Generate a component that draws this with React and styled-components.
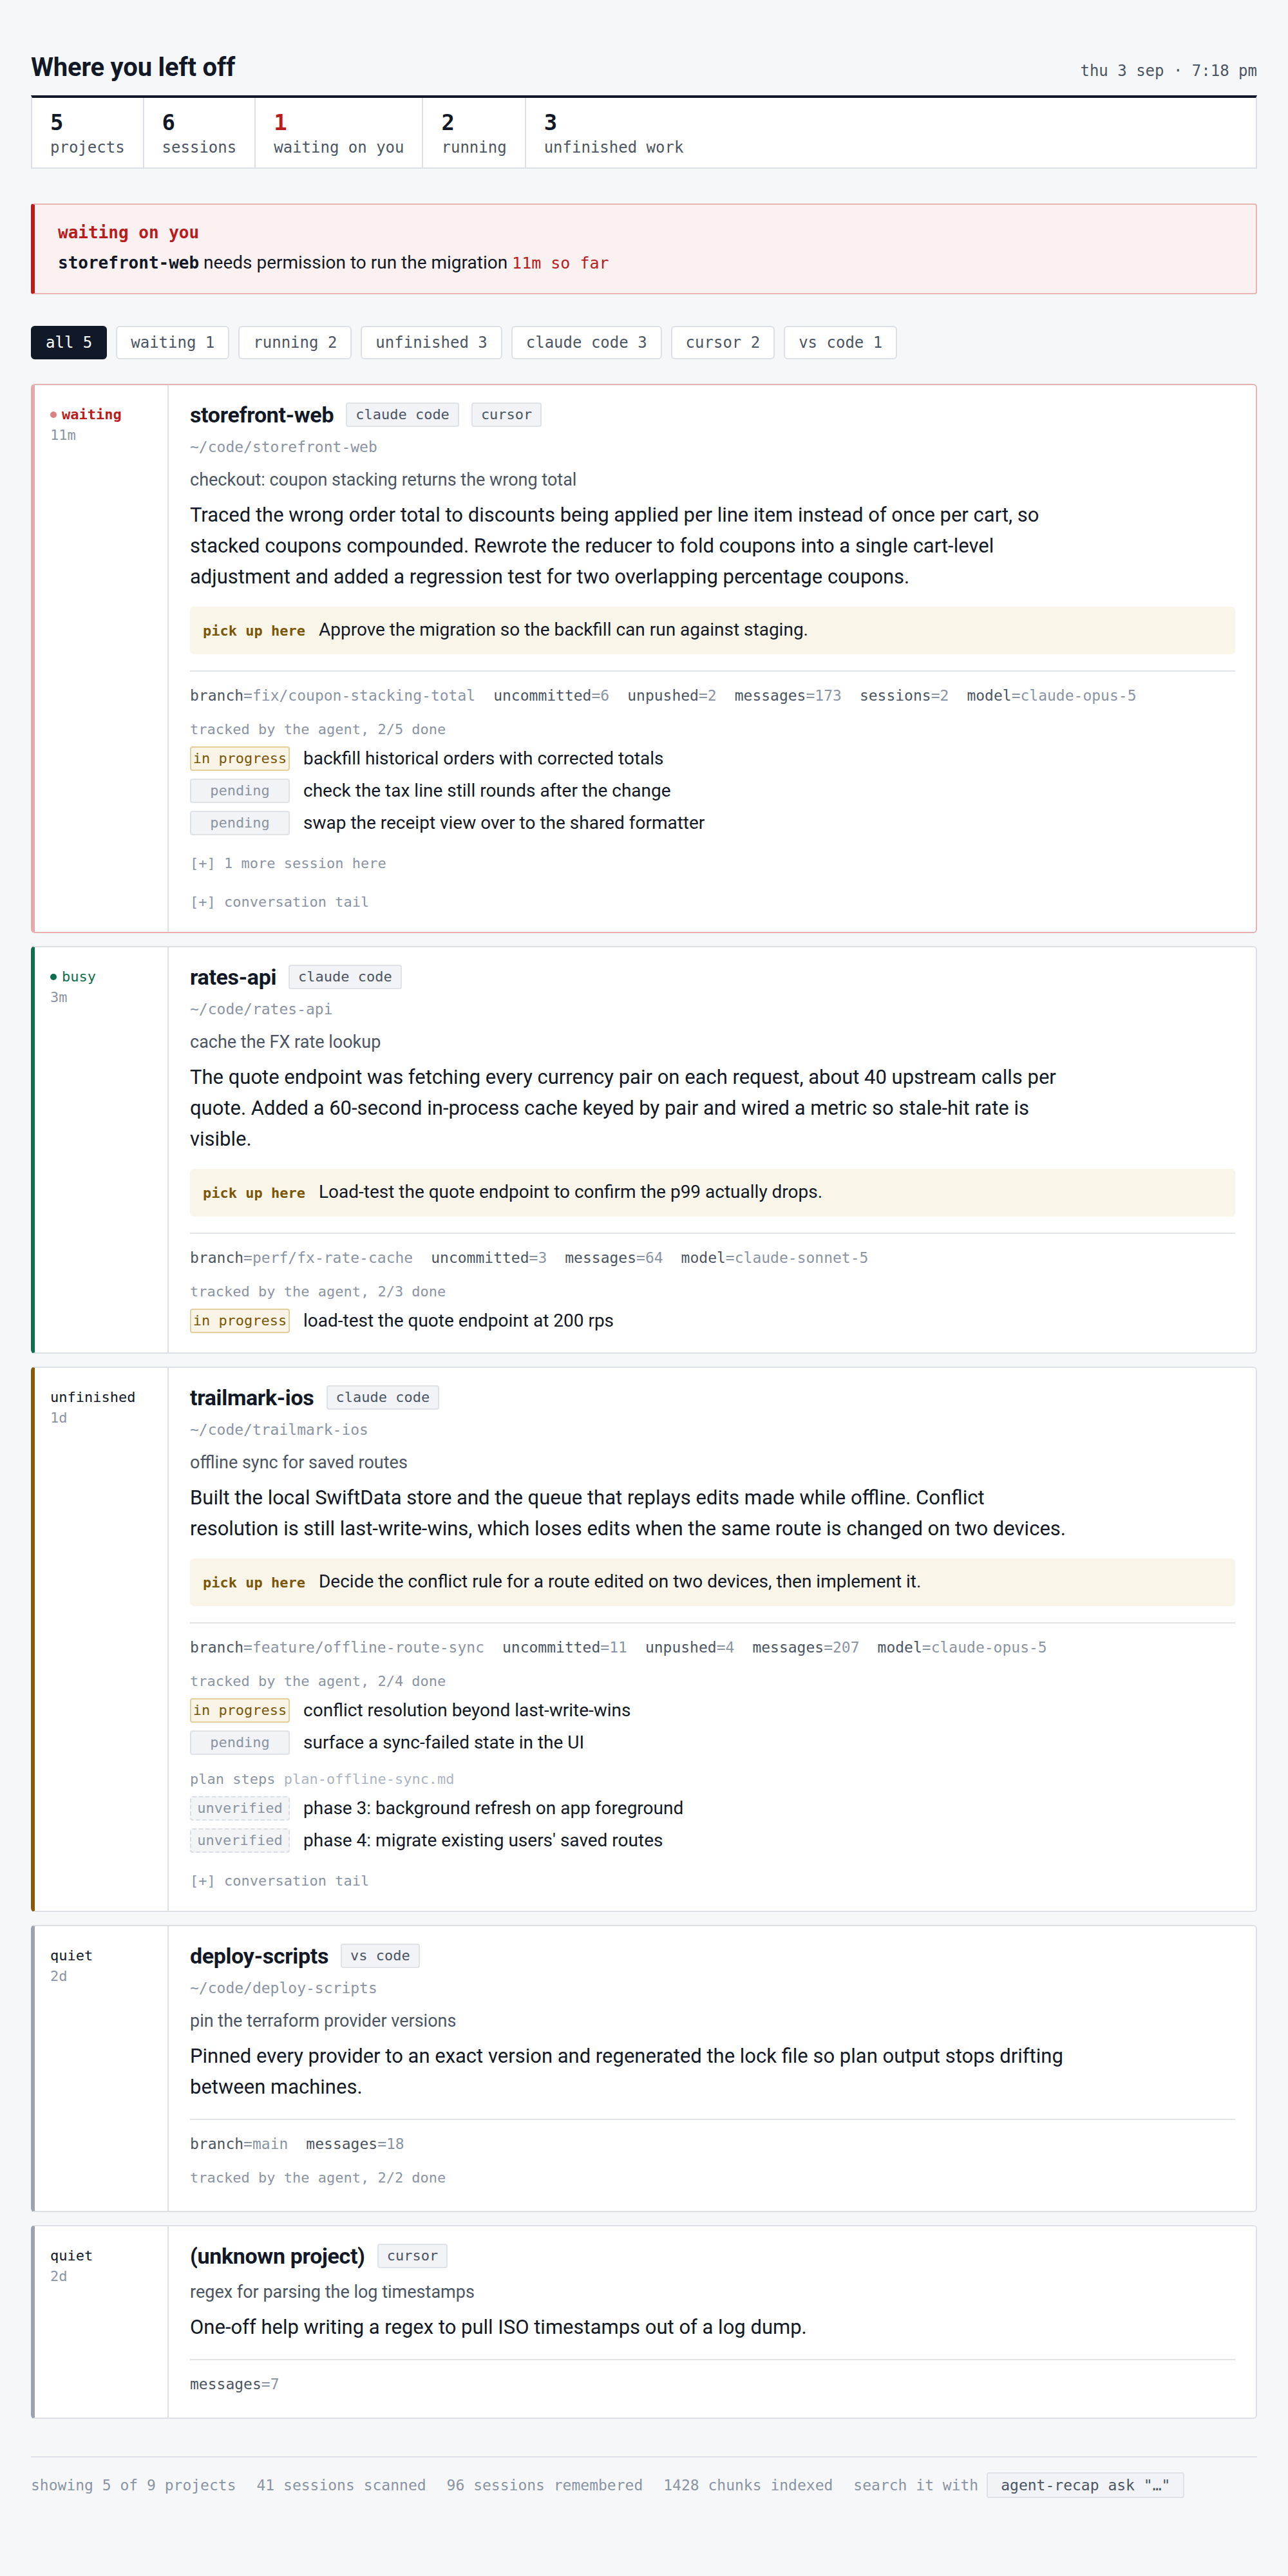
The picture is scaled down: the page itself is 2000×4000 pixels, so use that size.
import React from "react";
import styled, { createGlobalStyle, css } from "styled-components";

const SANS = `Roboto, "Liberation Sans", Arial, sans-serif`;
const MONO = `"DejaVu Sans Mono", "Liberation Mono", monospace`;

const Global = createGlobalStyle`
  html, body { margin: 0; padding: 0; background: #f6f7f9; }
  body { font-family: ${SANS}; color: #111827; }
  * { box-sizing: border-box; }
`;

const Page = styled.div`
  padding: 81px 48px 80px;
`;

const Header = styled.header`
  display: flex;
  justify-content: space-between;
  align-items: baseline;
  margin-bottom: 19px;
`;

const Title = styled.h1`
  margin: 0;
  font: 700 40px/48px ${SANS};
  letter-spacing: -0.005em;
  color: #111827;
`;

const Clock = styled.div`
  font: 24px/32px ${MONO};
  color: #4b5563;
`;

const Stats = styled.div`
  display: flex;
  background: #fff;
  border: 2px solid #dde1e7;
  border-top: 4px solid #111827;
  margin-bottom: 54px;
`;

const Stat = styled.div`
  padding: 18px 28px 15px;
  & + & { border-left: 2px solid #dde1e7; }
`;

const StatNum = styled.div`
  font: 700 34px/40px ${MONO};
  color: ${(p) => (p.$alert ? "#b91c1c" : "#111827")};
`;

const StatLabel = styled.div`
  margin-top: 3px;
  font: 24px/32px ${MONO};
  color: #4b5563;
`;

const Alert = styled.div`
  background: #fcf1f1;
  border: 2px solid #e8b4b4;
  border-left: 6px solid #b91c1c;
  border-radius: 4px;
  padding: 25px 36px 29px;
  margin-bottom: 49px;
`;

const AlertTitle = styled.div`
  font: 700 26px/36px ${MONO};
  color: #b91c1c;
`;

const AlertText = styled.div`
  margin-top: 11px;
  font: 28px/36px ${SANS};
  color: #111827;
`;

const Strong = styled.span`
  font: 700 26px ${MONO};
`;

const Late = styled.span`
  font: 25px ${MONO};
  color: #b91c1c;
`;

const Filters = styled.div`
  display: flex;
  gap: 14px;
  margin-bottom: 38px;
`;

const Filter = styled.button`
  font: 24px/32px ${MONO};
  padding: 8px 21px;
  border-radius: 6px;
  border: 2px solid #dde1e7;
  background: #fff;
  color: #4b5563;
  cursor: pointer;
  ${(p) =>
    p.$active &&
    css`
      background: #111827;
      border-color: #111827;
      color: #fff;
    `}
`;

const List = styled.div`
  display: flex;
  flex-direction: column;
  gap: 20px;
`;

const TONES = {
  waiting: { border: "#e8b1b1", accent: "#e6a9a9", text: "#b91c1c", weight: 700, dot: "rgba(185,28,28,0.55)" },
  busy: { border: "#dde1e7", accent: "#0f6e4e", text: "#0f6e4e", weight: 400, dot: "#0f6e4e" },
  unfinished: { border: "#dde1e7", accent: "#8a5a0b", text: "#111827", weight: 400, dot: null },
  quiet: { border: "#dde1e7", accent: "#9aa3af", text: "#111827", weight: 400, dot: null },
};

const Card = styled.article`
  display: grid;
  grid-template-columns: 208px 1fr;
  background: #fff;
  border: 2px solid ${(p) => TONES[p.$tone].border};
  border-left: 6px solid ${(p) => TONES[p.$tone].accent};
  border-radius: 6px;
`;

const Side = styled.div`
  border-right: 2px solid #dde1e7;
  padding: 30px 16px 20px 24px;
`;

const StatusLine = styled.div`
  display: flex;
  align-items: center;
  gap: 8px;
  font: ${(p) => TONES[p.$tone].weight} 22px/32px ${MONO};
  color: ${(p) => TONES[p.$tone].text};
`;

const Dot = styled.span`
  width: 10px;
  height: 10px;
  border-radius: 50%;
  background: ${(p) => p.$color};
  flex: none;
`;

const Ago = styled.div`
  font: 22px/32px ${MONO};
  color: #8a94a3;
`;

const Main = styled.div`
  padding: 25px 32px ${(p) => (p.$textEnd ? "35px" : "30px")} 33px;
  min-width: 0;
`;

const NameRow = styled.div`
  display: flex;
  align-items: center;
  gap: 19px;
  height: 42px;
`;

const Name = styled.h2`
  margin: 0;
  font: 700 34px/42px ${SANS};
  letter-spacing: -0.01em;
  color: #111827;
`;

const Tag = styled.span`
  font: 22px/30px ${MONO};
  padding: 2px 13px;
  border: 2px solid #dfe3e8;
  background: #f1f3f6;
  border-radius: 4px;
  color: #4b5563;
`;

const Path = styled.div`
  margin-top: 13px;
  font: 23px/32px ${MONO};
  color: #8a94a3;
`;

const Subject = styled.div`
  margin-top: 17px;
  font: 27px/36px ${SANS};
  color: #4b5563;
`;

const Body = styled.p`
  margin: 13px 0 0;
  max-width: 1368px;
  font: 31px/48px ${SANS};
  color: #111827;
`;

const Pickup = styled.div`
  margin-top: 22px;
  background: #f9f5e9;
  border-radius: 6px;
  padding: 18px 20px;
  display: flex;
  align-items: baseline;
  gap: 21px;
`;

const PickupLabel = styled.span`
  font: 700 22px/36px ${MONO};
  color: #7a5606;
`;

const PickupText = styled.span`
  font: 28px/36px ${SANS};
  color: #111827;
`;

const Details = styled.div`
  margin-top: 25px;
  border-top: 2px solid #e1e5ea;
  padding-top: 20px;
`;

const Meta = styled.div`
  display: flex;
  flex-wrap: wrap;
  column-gap: 28px;
  font: 23px/34px ${MONO};
`;

const MetaKey = styled.span`
  color: #4b5563;
`;

const MetaVal = styled.span`
  color: #8a94a3;
`;

const SectionLabel = styled.div`
  margin-top: ${(p) => p.$gap || "20px"};
  font: 22px/32px ${MONO};
  color: #8a94a3;
`;

const Faint = styled.span`
  color: #adb4bf;
`;

const Tasks = styled.div`
  margin-top: 10px;
  display: flex;
  flex-direction: column;
  gap: 12px;
`;

const Task = styled.div`
  display: flex;
  align-items: center;
  gap: 21px;
`;

const BADGES = {
  progress: { bg: "#faf4e6", border: "#e4cf9c", color: "#7a5606", style: "solid" },
  pending: { bg: "#f1f3f6", border: "#dfe3e8", color: "#8a94a3", style: "solid" },
  unverified: { bg: "#f3f4f6", border: "#dadfe5", color: "#8a94a3", style: "dashed" },
};

const Badge = styled.span`
  flex: none;
  width: 155px;
  text-align: center;
  font: 22px/30px ${MONO};
  padding: 2px 0;
  border-radius: 4px;
  border: 2px ${(p) => BADGES[p.$kind].style} ${(p) => BADGES[p.$kind].border};
  background: ${(p) => BADGES[p.$kind].bg};
  color: ${(p) => BADGES[p.$kind].color};
`;

const TaskText = styled.span`
  font: 28px/36px ${SANS};
  color: #111827;
`;

const Expand = styled.div`
  margin-top: 28px;
  font: 22px/32px ${MONO};
  color: #8a94a3;
  cursor: pointer;
`;

const Footer = styled.footer`
  margin-top: 58px;
  border-top: 2px solid #dde1e7;
  padding-top: 23px;
  display: flex;
  align-items: center;
  gap: 32px;
  font: 23px/40px ${MONO};
  color: #8a94a3;
`;

const Search = styled.span`
  display: flex;
  align-items: center;
  gap: 13px;
`;

const Code = styled.code`
  font: 23px/32px ${MONO};
  padding: 2px 20px;
  border: 2px solid #dde1e7;
  background: #f1f3f6;
  border-radius: 4px;
  color: #4b5563;
`;

const STATS = [
  ["5", "projects"],
  ["6", "sessions"],
  ["1", "waiting on you", true],
  ["2", "running"],
  ["3", "unfinished work"],
];

const FILTERS = ["all 5", "waiting 1", "running 2", "unfinished 3", "claude code 3", "cursor 2", "vs code 1"];

const CARDS = [
  {
    tone: "waiting",
    status: "waiting",
    ago: "11m",
    name: "storefront-web",
    tags: ["claude code", "cursor"],
    path: "~/code/storefront-web",
    subject: "checkout: coupon stacking returns the wrong total",
    body:
      "Traced the wrong order total to discounts being applied per line item instead of once per cart, so stacked coupons compounded. Rewrote the reducer to fold coupons into a single cart-level adjustment and added a regression test for two overlapping percentage coupons.",
    pickup: "Approve the migration so the backfill can run against staging.",
    meta: [["branch", "fix/coupon-stacking-total"], ["uncommitted", "6"], ["unpushed", "2"], ["messages", "173"], ["sessions", "2"], ["model", "claude-opus-5"]],
    tracked: "tracked by the agent, 2/5 done",
    tasks: [
      ["progress", "in progress", "backfill historical orders with corrected totals"],
      ["pending", "pending", "check the tax line still rounds after the change"],
      ["pending", "pending", "swap the receipt view over to the shared formatter"],
    ],
    expands: ["[+] 1 more session here", "[+] conversation tail"],
  },
  {
    tone: "busy",
    status: "busy",
    ago: "3m",
    name: "rates-api",
    tags: ["claude code"],
    path: "~/code/rates-api",
    subject: "cache the FX rate lookup",
    body:
      "The quote endpoint was fetching every currency pair on each request, about 40 upstream calls per quote. Added a 60-second in-process cache keyed by pair and wired a metric so stale-hit rate is visible.",
    pickup: "Load-test the quote endpoint to confirm the p99 actually drops.",
    meta: [["branch", "perf/fx-rate-cache"], ["uncommitted", "3"], ["messages", "64"], ["model", "claude-sonnet-5"]],
    tracked: "tracked by the agent, 2/3 done",
    tasks: [["progress", "in progress", "load-test the quote endpoint at 200 rps"]],
    expands: [],
  },
  {
    tone: "unfinished",
    status: "unfinished",
    ago: "1d",
    name: "trailmark-ios",
    tags: ["claude code"],
    path: "~/code/trailmark-ios",
    subject: "offline sync for saved routes",
    body:
      "Built the local SwiftData store and the queue that replays edits made while offline. Conflict resolution is still last-write-wins, which loses edits when the same route is changed on two devices.",
    pickup: "Decide the conflict rule for a route edited on two devices, then implement it.",
    meta: [["branch", "feature/offline-route-sync"], ["uncommitted", "11"], ["unpushed", "4"], ["messages", "207"], ["model", "claude-opus-5"]],
    tracked: "tracked by the agent, 2/4 done",
    tasks: [
      ["progress", "in progress", "conflict resolution beyond last-write-wins"],
      ["pending", "pending", "surface a sync-failed state in the UI"],
    ],
    plan: {
      file: "plan-offline-sync.md",
      steps: ["phase 3: background refresh on app foreground", "phase 4: migrate existing users' saved routes"],
    },
    expands: ["[+] conversation tail"],
  },
  {
    tone: "quiet",
    status: "quiet",
    ago: "2d",
    name: "deploy-scripts",
    tags: ["vs code"],
    path: "~/code/deploy-scripts",
    subject: "pin the terraform provider versions",
    body:
      "Pinned every provider to an exact version and regenerated the lock file so plan output stops drifting between machines.",
    meta: [["branch", "main"], ["messages", "18"]],
    tracked: "tracked by the agent, 2/2 done",
    tasks: [],
    expands: [],
  },
  {
    tone: "quiet",
    status: "quiet",
    ago: "2d",
    name: "(unknown project)",
    tags: ["cursor"],
    subject: "regex for parsing the log timestamps",
    body: "One-off help writing a regex to pull ISO timestamps out of a log dump.",
    meta: [["messages", "7"]],
    tasks: [],
    expands: [],
  },
];

function ProjectCard({ c }) {
  const tone = TONES[c.tone];
  const textEnd = c.tasks.length === 0 && c.expands.length === 0 && !c.plan;
  return (
    <Card $tone={c.tone}>
      <Side>
        <StatusLine $tone={c.tone}>
          {tone.dot && <Dot $color={tone.dot} />}
          {c.status}
        </StatusLine>
        <Ago>{c.ago}</Ago>
      </Side>
      <Main $textEnd={textEnd}>
        <NameRow>
          <Name>{c.name}</Name>
          {c.tags.map((t) => (
            <Tag key={t}>{t}</Tag>
          ))}
        </NameRow>
        {c.path && <Path>{c.path}</Path>}
        <Subject>{c.subject}</Subject>
        <Body>{c.body}</Body>
        {c.pickup && (
          <Pickup>
            <PickupLabel>pick up here</PickupLabel>
            <PickupText>{c.pickup}</PickupText>
          </Pickup>
        )}
        <Details>
          <Meta>
            {c.meta.map(([k, v]) => (
              <span key={k}>
                <MetaKey>{k}</MetaKey>
                <MetaVal>={v}</MetaVal>
              </span>
            ))}
          </Meta>
          {c.tracked && <SectionLabel>{c.tracked}</SectionLabel>}
          {c.tasks.length > 0 && (
            <Tasks>
              {c.tasks.map(([kind, label, text]) => (
                <Task key={text}>
                  <Badge $kind={kind}>{label}</Badge>
                  <TaskText>{text}</TaskText>
                </Task>
              ))}
            </Tasks>
          )}
          {c.plan && (
            <>
              <SectionLabel $gap="22px">
                plan steps <Faint>{c.plan.file}</Faint>
              </SectionLabel>
              <Tasks>
                {c.plan.steps.map((s) => (
                  <Task key={s}>
                    <Badge $kind="unverified">unverified</Badge>
                    <TaskText>{s}</TaskText>
                  </Task>
                ))}
              </Tasks>
            </>
          )}
          {c.expands.map((e) => (
            <Expand key={e}>{e}</Expand>
          ))}
        </Details>
      </Main>
    </Card>
  );
}

export default function App() {
  return (
    <>
      <Global />
      <Page>
        <Header>
          <Title>Where you left off</Title>
          <Clock>thu 3 sep · 7:18 pm</Clock>
        </Header>
        <Stats>
          {STATS.map(([n, l, a]) => (
            <Stat key={l}>
              <StatNum $alert={a}>{n}</StatNum>
              <StatLabel>{l}</StatLabel>
            </Stat>
          ))}
        </Stats>
        <Alert>
          <AlertTitle>waiting on you</AlertTitle>
          <AlertText>
            <Strong>storefront-web</Strong> needs permission to run the migration <Late>11m so far</Late>
          </AlertText>
        </Alert>
        <Filters>
          {FILTERS.map((f, i) => (
            <Filter key={f} $active={i === 0}>
              {f}
            </Filter>
          ))}
        </Filters>
        <List>
          {CARDS.map((c) => (
            <ProjectCard key={c.name} c={c} />
          ))}
        </List>
        <Footer>
          <span>showing 5 of 9 projects</span>
          <span>41 sessions scanned</span>
          <span>96 sessions remembered</span>
          <span>1428 chunks indexed</span>
          <Search>
            search it with <Code>agent-recap ask "…"</Code>
          </Search>
        </Footer>
      </Page>
    </>
  );
}
